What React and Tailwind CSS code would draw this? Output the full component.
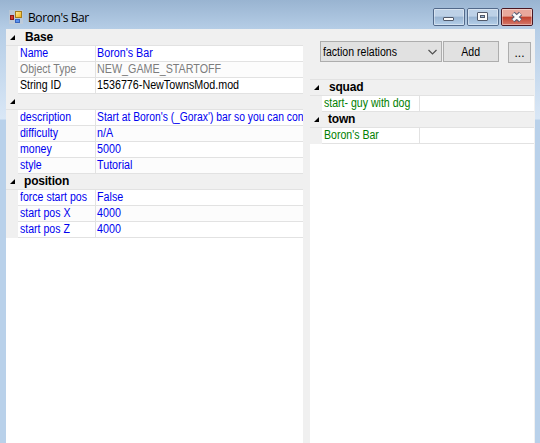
import React from "react";

function Arrow() {
  return (
    <svg className="ml-[4px] h-[5px] w-[5px] shrink-0" viewBox="0 0 5 5">
      <path d="M5 0V5H0Z" fill="#000" />
    </svg>
  );
}

function Header({ children, pad = "pl-[10px]" }) {
  return (
    <div className="flex h-4 shrink-0 items-center border-b border-[#e2e2e2] bg-[#f0f0f0]">
      <Arrow />
      <span className={`${pad} text-[12px] leading-[15px] font-bold tracking-[-0.2px] text-black`}>{children}</span>
    </div>
  );
}

function Row({ name, value, color = "text-[#0000f0]", col = "w-[78px]", alt = false, scale = "scale-x-[.895]" }) {
  const bg = alt ? "bg-[#fcfcfc]" : "bg-white";
  return (
    <div className={`flex h-4 shrink-0 ${color}`}>
      <div className="w-3 shrink-0 bg-[#f0f0f0]" />
      <div className={`${col} ${bg} flex shrink-0 border-r border-b border-[#e2e2e2] pl-[2px] leading-[15px]`}>
        <span className="origin-left scale-x-[.88]">{name}</span>
      </div>
      <div className={`${bg} flex min-w-0 flex-1 border-b border-[#e2e2e2] pl-px leading-[15px]`}>
        <span className={`origin-left ${scale}`}>{value}</span>
      </div>
    </div>
  );
}

function AppIcon() {
  return (
    <svg className="h-[14px] w-[14px]" viewBox="0 0 14 14">
      <defs>
        <linearGradient id="gold" x2="1" y2="1">
          <stop stopColor="#fff0a0" />
          <stop offset="1" stopColor="#f0ae10" />
        </linearGradient>
      </defs>
      <path d="M0 0H14V14H0Z" fill="#c8cdd4" opacity=".6" />
      <rect x="6.5" y="1.5" width="6" height="6" fill="url(#gold)" stroke="#a77b16" />
      <rect x="1.5" y="5.5" width="3" height="4" fill="#d43a2c" stroke="#8e1b16" />
      <rect x="6.5" y="9.5" width="4" height="3" fill="#5b91ec" stroke="#3565c0" />
    </svg>
  );
}

function WindowButton({ kind }) {
  const close = kind === "close";
  return (
    <div
      className={`flex h-[18px] w-8 items-center justify-center rounded-[2px] border ${
        close
          ? "border-[#4a1722] bg-linear-to-b from-[#e8a89c] from-45% via-[#c0402c] via-50% to-[#d4776a]"
          : "border-[#52698a] bg-linear-to-b from-[#bdd1e7] from-45% via-[#98b4d2] via-50% to-[#b5cfe9]"
      }`}
    >
      <svg className="h-4 w-[30px] shrink-0" viewBox="0 0 30 16">
        <rect x=".5" y=".5" width="29" height="15" fill="none" stroke="#fff" opacity=".4" />
        {kind === "min" && <rect x="9.5" y="8.5" width="10" height="3" rx=".5" fill="#fafafa" stroke="#51596a" />}
        {kind === "max" && (
          <g stroke="#51596a">
            <rect x="9.5" y="3.5" width="10" height="8" rx=".5" fill="#fafafa" />
            <rect x="12.5" y="6.5" width="4" height="2" fill="#9bb8d8" />
          </g>
        )}
        {close && (
          <g fill="none">
            <path d="M11 4.5L18.5 11.5M18.5 4.5L11 11.5" stroke="#555970" strokeWidth="4.6" />
            <path d="M11.2 4.7L18.3 11.3M18.3 4.7L11.2 11.3" stroke="#fafafa" strokeWidth="2.6" />
          </g>
        )}
      </svg>
    </div>
  );
}

export default function App() {
  return (
    <div className="flex h-[443px] w-[540px] flex-col overflow-hidden bg-[linear-gradient(to_bottom,#99b4d1_0px,#b5cde6_29px,#d9e7f6_119px,#b9d1ea_120px)] font-['Liberation_Sans',sans-serif] text-[12px] whitespace-nowrap">
      <div className="flex h-[29px] shrink-0 items-start pr-[7px] pl-[9px]">
        <div className="mt-[10px]"><AppIcon /></div>
        <span className="mt-[10px] ml-[5px] font-['Open_Sans',sans-serif] text-[12px] leading-4 tracking-[-0.4px] text-black">Boron's Bar</span>
        <div className="mt-2 ml-auto flex gap-[2px]">
          <WindowButton kind="min" />
          <WindowButton kind="max" />
          <WindowButton kind="close" />
        </div>
      </div>
      <div className="mr-[5px] ml-[6px] flex min-h-0 flex-1 bg-[#f0f0f0]">
        <div className="flex w-[297px] flex-col overflow-hidden bg-white">
          <div className="h-px shrink-0 bg-[#f0f0f0]" />
          <Header>Base</Header>
          <Row name="Name" value="Boron's Bar" />
          <Row name="Object Type" value="NEW_GAME_STARTOFF" color="text-[#7c7c7c]" alt />
          <Row name="String ID" value="1536776-NewTownsMod.mod" color="text-black" />
          <Header />
          <Row name="description" value="Start at Boron's (_Gorax') bar so you can con" scale="scale-x-[.86]" />
          <Row name="difficulty" value="n/A" alt />
          <Row name="money" value="5000" />
          <Row name="style" value="Tutorial" alt />
          <Header pad="pl-[9px]">position</Header>
          <Row name="force start pos" value="False" />
          <Row name="start pos X" value="4000" alt />
          <Row name="start pos Z" value="4000" />
        </div>
        <div className="ml-[7px] flex w-[224px] flex-col">
          <div className="flex h-[51px] shrink-0 items-start border-b border-[#e2e2e2] pt-3 pl-[10px]">
            <div className="flex h-[21px] w-[122px] items-center border border-[#adadad] bg-[#e1e1e1] pr-1 pl-[2px]">
              <span className="w-0 origin-left scale-x-[.88]">faction relations</span>
              <svg className="ml-auto h-[6px] w-[9px]" viewBox="0 0 9 6">
                <path d="M.5 1L4.5 5L8.5 1" fill="none" stroke="#505050" strokeWidth="1.2" />
              </svg>
            </div>
            <div className="ml-px flex h-[21px] w-14 items-center justify-center border border-[#adadad] bg-[#e1e1e1]">
              <span className="scale-x-[.88]">Add</span>
            </div>
            <div className="mt-px ml-[9px] flex h-[21px] w-[23px] items-center justify-center border border-[#adadad] bg-[#e1e1e1]">...</div>
          </div>
          <div className="flex flex-1 flex-col bg-white">
            <Header>squad</Header>
            <Row name="start- guy with dog" color="text-[#008000]" col="w-[98px]" />
            <Header pad="pl-[9px]">town</Header>
            <Row name="Boron's Bar" color="text-[#008000]" col="w-[98px]" />
          </div>
        </div>
      </div>
    </div>
  );
}
